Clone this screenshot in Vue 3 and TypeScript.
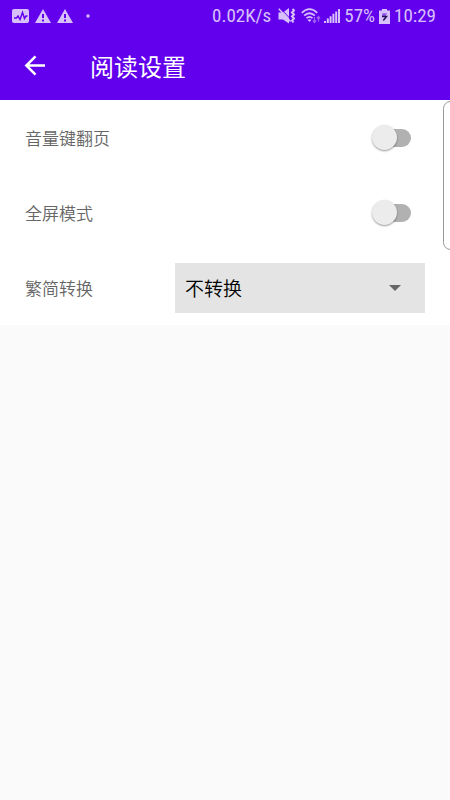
<script setup lang="ts">
import { reactive, ref } from 'vue'

interface Toggle {
  id: string
  label: string
  on: boolean
}

const toggles = reactive<Toggle[]>([
  { id: 'volume-keys', label: '音量键翻页', on: false },
  { id: 'full-screen', label: '全屏模式', on: false },
])

const conversion = ref<string>('不转换')
</script>

<template>
  <div class="screen">
    <header class="top">
      <div class="status">
        <div class="notices">
          <svg width="17" height="14" viewBox="0 0 17 14" aria-hidden="true">
            <rect width="17" height="14" rx="2" class="tint" />
            <path d="M2 9h2.500l1.500-2 2 3.500 2.500-7 2 6 1.500-2.500h1.500" class="cut-line" />
          </svg>
          <svg v-for="n in 2" :key="n" width="16" height="14" viewBox="0 0 16 14" aria-hidden="true">
            <path d="M8 0 16 14H0z" class="tint" />
            <path d="M7 5h2v4H7zM7 10.500h2v2H7z" class="cut" />
          </svg>
          <svg class="dot" width="4" height="4" viewBox="0 0 4 4" aria-hidden="true">
            <circle cx="2" cy="2" r="1.700" class="tint" />
          </svg>
        </div>
        <div class="system">
          <span>0.02K/s</span>
          <svg class="mute" width="17" height="16" viewBox="0 0 17 16" aria-hidden="true">
            <path d="M0.500 4.500H5L11 0v15.500L5 11.500H0.500z" class="tint" />
            <path d="M2.500 0.500 13 11.500" class="cut-thin" />
            <path d="M0.800 0.800 12.500 13.500" class="thin" />
            <path d="M14.500 1l1.500 1.500-2 2 2 2-2 2 2 2-2 2 1.500 2" class="buzz" />
          </svg>
          <svg class="wifi" width="20" height="16" viewBox="0 0 20 16" aria-hidden="true">
            <path d="M0.800 4.800Q8.500-2.500 16.200 4.800M3.200 7.700Q8.500 2.800 13.800 7.700M5.500 10.200Q8.500 7.500 11.500 10.200" class="wave" />
            <path d="M6.500 11.800Q8.500 10.500 10.500 11.800L8.500 14z" class="tint" />
            <path d="M13.500 9v5.500M12 12.500l1.500 2 1.500-2M17.500 13.500V9M16 10.500l1.500-2 1.500 2" class="traffic" />
          </svg>
          <svg class="signal" width="16" height="14" viewBox="0 0 16 14" aria-hidden="true">
            <path d="M0 12h2v2H0zM2.800 9.500h2V14h-2zM5.600 7.200h2V14h-2zM8.400 4.800h2V14h-2zM11.200 2.400h2V14h-2zM14 0h2v14h-2z" class="tint" />
          </svg>
          <span class="percent">57%</span>
          <svg class="battery" width="11" height="15" viewBox="0 0 11 15" aria-hidden="true">
            <path d="M3 0h5v1.500h3V15H0V1.500h3z" class="tint" />
            <path d="M3.500 4.200h4.500L6.500 7h-3.500z" class="bolt-top" />
            <path d="M3 7.500h4.500L4.300 11.500" class="bolt" />
          </svg>
          <time class="clock">10:29</time>
        </div>
      </div>
      <div class="bar">
        <button type="button" class="back" aria-label="返回">
          <svg width="22" height="22" viewBox="0 0 22 22" aria-hidden="true">
            <path d="M21 10.500H2.500M11.500 1.300 2.300 10.500l9.200 9.200" />
          </svg>
        </button>
        <h1>阅读设置</h1>
      </div>
    </header>

    <main class="settings">
      <div v-for="item in toggles" :key="item.id" class="row">
        <label :for="item.id">{{ item.label }}</label>
        <input :id="item.id" v-model="item.on" type="checkbox" role="switch" class="switch" />
      </div>
      <div class="row">
        <label for="conversion">繁简转换</label>
        <div class="picker">
          <select id="conversion" v-model="conversion">
            <option>不转换</option>
          </select>
          <svg width="12" height="6" viewBox="0 0 12 6" aria-hidden="true">
            <path d="M0 0h12L6 6z" />
          </svg>
        </div>
      </div>
    </main>

    <div class="edge" aria-hidden="true"></div>
  </div>
</template>

<style>
body {
  background: #fafafa;
}
</style>

<style scoped>
.screen {
  position: relative;
  overflow: hidden;
  font-family: "Noto Sans CJK SC", sans-serif;
  font-weight: 350;
}

.top {
  background: #6200ee;
  color: #fff;
}

.status {
  display: flex;
  justify-content: space-between;
  align-items: center;
  height: 32px;
  padding: 0 14px 0 12px;
  color: #d8c0fb;
  font-family: "Roboto Condensed", "Liberation Sans Narrow", Roboto, sans-serif;
  font-size: 19px;
  font-weight: 400;
  line-height: 32px;
}

.notices,
.system {
  display: flex;
  align-items: center;
}

.notices {
  gap: 6px;
}

.dot {
  margin-left: 7px;
}

.mute {
  margin-left: 7px;
}

.wifi {
  margin-left: 6px;
}

.signal {
  margin-left: 3px;
}

.percent {
  margin-left: 4px;
}

.battery {
  margin-left: 4px;
}

.clock {
  margin-left: 4px;
}

.tint {
  fill: #d8c0fb;
}

.cut {
  fill: #6200ee;
}

.cut-line,
.cut-thin,
.thin,
.buzz,
.wave,
.traffic {
  fill: none;
  stroke: #6200ee;
  stroke-width: 1.5;
}

.cut-thin {
  stroke-width: 1;
}

.thin,
.buzz {
  stroke: #d8c0fb;
}

.buzz {
  stroke-width: 2;
}

.wave {
  stroke: #d8c0fb;
  stroke-width: 1.8;
}

.traffic {
  stroke: #9d60f5;
  stroke-width: 1.3;
}

.bolt-top {
  fill: #8a50e8;
}

.bolt {
  fill: none;
  stroke: #25105c;
  stroke-width: 1.5;
}

.bar {
  display: flex;
  align-items: center;
  height: 68px;
  padding: 0 24px;
}

.back {
  display: flex;
  width: 22px;
  padding: 0;
  border: 0;
  background: none;
}

.back path {
  fill: none;
  stroke: #fff;
  stroke-width: 2.5;
}

h1 {
  margin: 0 0 0 44px;
  font-size: 24px;
  font-weight: 400;
  line-height: 32px;
}

.settings {
  background: #fff;
}

.row {
  display: flex;
  align-items: center;
  height: 75px;
  padding: 0 25px;
}

.row label {
  flex: 0 0 150px;
  color: #666;
  font-size: 17px;
  line-height: 24px;
}

.switch {
  position: relative;
  appearance: none;
  width: 40px;
  height: 26px;
  margin: 0 14px 0 auto;
}

.switch::before {
  content: "";
  position: absolute;
  inset: 4px 0 4px 4px;
  border-radius: 9px;
  background: #b1b1b1;
}

.switch::after {
  content: "";
  position: absolute;
  top: 0;
  left: 1px;
  width: 25px;
  height: 25px;
  border-radius: 50%;
  background: #ececec;
  box-shadow: 0 1px 2px rgba(0, 0, 0, 0.4);
}

.switch:checked::before {
  background: #b388f5;
}

.switch:checked::after {
  left: 15px;
  background: #6200ee;
}

.picker {
  display: grid;
  flex: 1;
  align-items: center;
}

.picker select,
.picker svg {
  grid-area: 1 / 1;
}

.picker select {
  appearance: none;
  width: 100%;
  height: 50px;
  padding: 0 40px 0 10px;
  border: 0;
  border-radius: 0;
  background: #e4e4e4;
  color: #000;
  font-family: inherit;
  font-size: 19px;
  font-weight: inherit;
}

.picker svg {
  justify-self: end;
  margin-right: 24px;
  fill: #666;
  pointer-events: none;
}

.edge {
  position: absolute;
  top: 101px;
  right: -8px;
  width: 13px;
  height: 147px;
  border: 1px solid #999;
  border-radius: 8px;
  background: #fff;
}
</style>
